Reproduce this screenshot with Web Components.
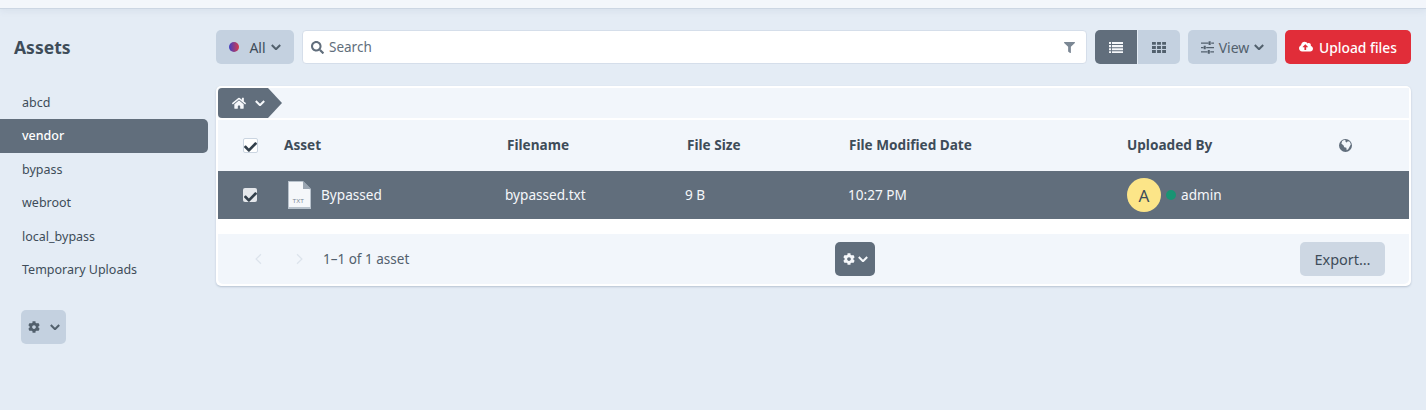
<!DOCTYPE html>
<html lang="en">
<head>
<meta charset="utf-8">
<title>Assets</title>
<style>
  html, body { margin: 0; height: 100%; }
  body { background: #e4ecf5; font-family: "Noto Sans", "Open Sans", sans-serif; font-size: 13.5px; color: #3e4c59; overflow: hidden; }
</style>
</head>
<body>
<asset-page></asset-page>

<script>
const ICONS = {
    gear: ['0 0 512 512', 'M487.4 315.7l-42.6-24.6c4.3-23.2 4.3-47 0-70.2l42.6-24.6c4.9-2.8 7.1-8.6 5.5-14-11.1-35.6-30-67.8-54.7-94.6-3.8-4.1-10-5.1-14.8-2.3L380.8 110c-17.9-15.4-38.5-27.3-60.8-35.1V25.8c0-5.6-3.9-10.5-9.4-11.7-36.7-8.2-74.3-7.8-109.2 0-5.5 1.2-9.4 6.1-9.4 11.7V75c-22.2 7.9-42.8 19.8-60.8 35.1L88.7 85.5c-4.9-2.8-11-1.9-14.8 2.3-24.7 26.7-43.6 58.9-54.7 94.6-1.7 5.4.6 11.2 5.5 14L67.3 221c-4.3 23.2-4.3 47 0 70.2l-42.6 24.6c-4.9 2.8-7.1 8.6-5.5 14 11.1 35.6 30 67.8 54.7 94.6 3.8 4.1 10 5.1 14.8 2.3l42.6-24.6c17.9 15.4 38.5 27.3 60.8 35.1v49.2c0 5.6 3.9 10.5 9.4 11.7 36.7 8.2 74.3 7.8 109.2 0 5.5-1.2 9.4-6.1 9.4-11.7v-49.2c22.2-7.9 42.8-19.8 60.8-35.1l42.6 24.6c4.9 2.8 11 1.9 14.8-2.3 24.7-26.7 43.6-58.9 54.7-94.6 1.5-5.5-.7-11.3-5.6-14.1zM256 336c-44.1 0-80-35.9-80-80s35.9-80 80-80 80 35.9 80 80-35.9 80-80 80z'],
    check: ['0 0 512 512', 'M173.898 439.404l-166.4-166.4c-9.997-9.997-9.997-26.206 0-36.204l36.203-36.204c9.997-9.998 26.207-9.998 36.204 0L192 312.69 432.095 72.596c9.997-9.997 26.207-9.997 36.204 0l36.203 36.204c9.997 9.997 9.997 26.206 0 36.204l-294.4 294.401c-9.998 9.997-26.207 9.997-36.204-.001z'],
    home: ['0 0 576 512', 'M280.37 148.26L96 300.11V464a16 16 0 0 0 16 16l112.06-.29a16 16 0 0 0 15.92-16V368a16 16 0 0 1 16-16h64a16 16 0 0 1 16 16v95.64a16 16 0 0 0 16 16.05L464 480a16 16 0 0 0 16-16V300L295.67 148.26a12.19 12.19 0 0 0-15.3 0zM571.6 251.47L488 182.56V44.05a12 12 0 0 0-12-12h-56a12 12 0 0 0-12 12v72.61L318.47 43a48 48 0 0 0-61 0L4.34 251.47a12 12 0 0 0-1.6 16.9l25.5 31A12 12 0 0 0 45.15 301l235.22-193.74a12.19 12.19 0 0 1 15.3 0L530.9 301a12 12 0 0 0 16.9-1.6l25.5-31a12 12 0 0 0-1.7-16.93z'],
    upload: ['0 0 640 512', 'M537.6 226.6c4.1-10.7 6.4-22.4 6.4-34.6 0-53-43-96-96-96-19.7 0-38.1 6-53.3 16.2C367 64.2 315.3 32 256 32c-88.4 0-160 71.6-160 160 0 2.7.1 5.4.2 8.1C40.2 219.8 0 273.2 0 336c0 79.5 64.5 144 144 144h368c70.7 0 128-57.3 128-128 0-61.9-44-113.6-102.4-125.4zM393.4 288H328v112c0 8.8-7.2 16-16 16h-48c-8.8 0-16-7.2-16-16V288h-65.4c-14.3 0-21.4-17.2-11.3-27.3l105.4-105.4c6.2-6.2 16.4-6.2 22.6 0l105.4 105.4c10.1 10.1 2.9 27.3-11.3 27.3z'],
    filter: ['0 0 512 512', 'M487.976 0H24.028C2.71 0-8.047 25.866 7.058 40.971L192 225.941V432c0 7.831 3.821 15.17 10.237 20.064l80 59.996C298.02 523.19 320 512.641 320 492.052V225.941l184.946-184.97C520.021 25.896 509.338 0 487.976 0z'],
    search: ['0 0 512 512', 'M505 442.7L405.3 343c-4.5-4.5-10.6-7-17-7H372c27.6-35.3 44-79.7 44-128C416 93.1 322.9 0 208 0S0 93.1 0 208s93.1 208 208 208c48.3 0 92.7-16.4 128-44v16.3c0 6.4 2.5 12.5 7 17l99.7 99.7c9.4 9.4 24.6 9.4 33.9 0l28.3-28.3c9.4-9.4 9.4-24.6.1-34zM208 336c-70.7 0-128-57.2-128-128 0-70.7 57.2-128 128-128 70.7 0 128 57.2 128 128 0 70.7-57.2 128-128 128z'],
    list: ['0 0 16 14', 'M0 1h2.4v2.4H0zM3.4 1H16v2.4H3.4zM0 4.6h2.4V7H0zM3.4 4.6H16V7H3.4zM0 8.2h2.4v2.4H0zM3.4 8.2H16v2.4H3.4zM0 11.8h2.4V14H0zM3.4 11.8H16V14H3.4z'],
    grid: ['0 0 16 14', 'M0 1h4.4v3.4H0zM5.8 1h4.4v3.4H5.8zM11.6 1H16v3.4h-4.4zM0 5.6h4.4V9H0zM5.8 5.6h4.4V9H5.8zM11.6 5.6H16V9h-4.4zM0 10.2h4.4v3.4H0zM5.8 10.2h4.4v3.4H5.8zM11.6 10.2H16v3.4h-4.4z'],
    sliders: ['0 0 14 14', 'M0 1.7h8V3H0zM11 1.7h3V3h-3zM8.2.4h2.2v3.9H8.2zM0 6.4h2.6v1.3H0zM5.6 6.4H14v1.3H5.6zM2.9 5.1h2.2V9H2.9zM0 11h7v1.3H0zM10 11h4v1.3h-4zM7.3 9.7h2.2v3.9H7.3z'],
    chevron: ['0 0 12 8', 'M1.8.4L6 4.6 10.2.4 11.9 2.1 6 8 .1 2.1z'],
    left: ['0 0 8 12', 'M6.5.8L1.2 6l5.3 5.2.9-.9L3 6l4.4-4.3z'],
    right: ['0 0 8 12', 'M1.5.8L6.8 6l-5.3 5.2-.9-.9L5 6 .6 1.7z'],
    globe: ['0 0 14 14', 'M7 0a7 7 0 1 0 0 14A7 7 0 0 0 7 0zM3.4 2.2c1-.7 2-.9 3-1l.8.8-.3 1 1.5.8 1-1.3 1.6.3c.9.8 1.6 2 1.7 3.2l-1.2 2-1.6 3-1.6 1-.4-2.7L5.7 9l-.9-2.2L2.6 5z']
};

class AmIcon extends HTMLElement {
    connectedCallback() {
        const [box, d] = ICONS[this.getAttribute('name')];
        const w = this.getAttribute('w') || 14;
        this.attachShadow({ mode: 'open' });
        this.shadowRoot.innerHTML = `
            <style>:host { display: inline-flex; flex: none; } svg { display: block; fill: currentColor; }</style>
            <svg width="${w}" viewBox="${box}"><path fill-rule="evenodd" d="${d}"/></svg>`;
    }
}

class AmButton extends HTMLElement {
    constructor() {
        super();
        this.attachShadow({ mode: 'open' });
        this.shadowRoot.innerHTML = `
            <style>
                :host {
                    display: inline-flex; align-items: center; justify-content: center; box-sizing: border-box;
                    height: 34px; gap: 5px; border-radius: 5px; background: #c4d1e0; color: #3e4c59; flex: none;
                }
                :host([tone="dark"]) { background: #616e7c; color: #f5f7fa; }
                :host([tone="red"]) { background: #e12d39; color: #fff; font-weight: 500; }
                :host([tone="soft"]) { background: #cdd7e3; color: #3e4c59; }
            </style>
            <slot></slot>`;
    }
}

class AmSideItem extends HTMLElement {
    constructor() {
        super();
        this.attachShadow({ mode: 'open' });
        this.shadowRoot.innerHTML = `
            <style>
                :host {
                    display: flex; align-items: center; box-sizing: border-box; height: 33.5px;
                    padding-left: 22px; border-radius: 0 5px 5px 0; color: #3e4c59; font-size: 12.5px;
                }
                :host([active]) { background: #616e7c; color: #fff; font-weight: 500; }
            </style>
            <slot></slot>`;
    }
}

class AmSidebar extends HTMLElement {
    constructor() {
        super();
        this.attachShadow({ mode: 'open' });
        this.shadowRoot.innerHTML = `
            <style>
                :host { display: block; width: 208px; flex: none; }
                h1 { margin: 0; padding: 27px 0 0 14px; height: 49.5px; font-size: 17.5px; line-height: 22px; font-weight: 700; color: #3e4c59; }
                .tools { margin: 23.5px 0 0 21px; }
            </style>
            <h1>Assets</h1>
            <nav>
                <am-side-item>abcd</am-side-item>
                <am-side-item active>vendor</am-side-item>
                <am-side-item>bypass</am-side-item>
                <am-side-item>webroot</am-side-item>
                <am-side-item>local_bypass</am-side-item>
                <am-side-item>Temporary Uploads</am-side-item>
            </nav>
            <div class="tools">
                <am-button style="width:45px;gap:10px;color:#52606d">
                    <am-icon name="gear" w="12"></am-icon><am-icon name="chevron" w="10"></am-icon>
                </am-button>
            </div>`;
    }
}

class AmToolbar extends HTMLElement {
    constructor() {
        super();
        this.attachShadow({ mode: 'open' });
        this.shadowRoot.innerHTML = `
            <style>
                :host { display: flex; align-items: center; height: 34px; font-size: 14px; }
                .dot { width: 10px; height: 10px; border-radius: 50%; background: linear-gradient(90deg, #3f3fc4, #d63a4a); margin-right: 5px; }
                .search {
                    flex: 1; display: flex; align-items: center; height: 34px; box-sizing: border-box;
                    margin: 0 8px; padding: 0 11px 0 8px; gap: 5px; background: #fff; border: 1px solid #d5deea;
                    border-radius: 4px; color: #616e7c; font-size: 13.5px;
                }
                .search span { flex: 1; }
                .seg { display: flex; margin-right: 8px; }
                .seg am-button { width: 42px; }
                .seg am-button:first-child { border-radius: 5px 0 0 5px; margin-right: 1px; }
                .seg am-button:last-child { border-radius: 0 5px 5px 0; width: 42px; color: #52606d; }
            </style>
            <am-button style="width:78px"><span class="dot"></span>All<am-icon name="chevron" w="10" style="color:#52606d"></am-icon></am-button>
            <div class="search">
                <am-icon name="search" w="13"></am-icon><span>Search</span>
                <am-icon name="filter" w="11" style="color:#7b8794"></am-icon>
            </div>
            <div class="seg">
                <am-button tone="dark"><am-icon name="list" w="14"></am-icon></am-button>
                <am-button><am-icon name="grid" w="14"></am-icon></am-button>
            </div>
            <am-button style="width:89px;margin-right:8px;color:#52606d"><am-icon name="sliders" w="13"></am-icon>View<am-icon name="chevron" w="10"></am-icon></am-button>
            <am-button tone="red" style="width:126px;gap:6px;font-size:13.8px"><am-icon name="upload" w="14"></am-icon>Upload files</am-button>`;
    }
}

class AmCheck extends HTMLElement {
    constructor() {
        super();
        this.attachShadow({ mode: 'open' });
        this.shadowRoot.innerHTML = `
            <style>
                :host {
                    display: inline-flex; align-items: center; justify-content: center; box-sizing: border-box;
                    width: 15px; height: 15px; border-radius: 2px; background: #fff; border: 1px solid #cbd5e1; color: #323f4b;
                }
                :host([bare]) { border: 0; width: 14px; height: 14px; background: #e4e7eb; }
                am-icon { transform: translateY(1.5px); }
            </style>
            <am-icon name="check" w="13"></am-icon>`;
    }
}

class AssetTable extends HTMLElement {
    constructor() {
        super();
        this.attachShadow({ mode: 'open' });
        this.shadowRoot.innerHTML = `
            <style>
                :host { display: block; font-size: 13.6px; }
                .row { display: grid; grid-template-columns: 66px 221px 180px 163px 279px 212px 1fr; align-items: center; }
                .head { height: 51px; background: #f2f6fb; font-weight: 700; color: #3e4c59; font-size: 13.6px; }
                .nudge { transform: translateX(2px); }
                .nudge1 { transform: translateX(1px); }
                .t { padding-bottom: 2px; }
                .body { height: 48px; background: #616e7c; color: #f5f7fa; }
                .cc { display: flex; justify-content: center; transform: translateX(-1px); }
                .asset { display: flex; align-items: center; gap: 10px; }
                .user { display: flex; align-items: center; }
                .avatar { width: 34px; height: 34px; border-radius: 50%; background: #fce588; color: #3e4c59; display: flex; align-items: center; justify-content: center; font-size: 17px; }
                .status { width: 10px; height: 10px; border-radius: 50%; background: #199473; margin: 0 5px; }
                .spacer { height: 15px; background: #fff; }
                .globe { color: #616e7c; display: flex; }
                svg text { font-family: "Liberation Sans", sans-serif; font-size: 6px; fill: #7b8794; }
            </style>
            <div class="row head">
                <div class="cc"><am-check></am-check></div>
                <div class="t">Asset</div><div class="t nudge">Filename</div><div class="t nudge">File Size</div>
                <div class="t nudge1">File Modified Date</div><div class="t">Uploaded By</div>
                <div class="globe"><am-icon name="globe" w="13"></am-icon></div>
            </div>
            <div class="row body">
                <div class="cc"><am-check bare></am-check></div>
                <div class="asset">
                    <svg width="23" height="28" viewBox="0 0 23 28" style="margin-left:4px;flex:none">
                        <path d="M0 0h15l8 8v20H0z" fill="#b8c2cc"/>
                        <path d="M1 1h13.5l7.5 7.5V26H1z" fill="#f5f7fa"/>
                        <path d="M15 0l8 8h-8z" fill="#9aa5b1"/>
                        <text x="4.5" y="21.5">TXT</text>
                    </svg>
                    <span class="t">Bypassed</span>
                </div>
                <div class="t">bypassed.txt</div><div class="t">9 B</div><div class="t">10:27 PM</div>
                <div class="user"><span class="avatar">A</span><span class="status"></span><span class="t">admin</span></div>
                <div></div>
            </div>
            <div class="spacer"></div>`;
    }
}

class AmFooter extends HTMLElement {
    constructor() {
        super();
        this.attachShadow({ mode: 'open' });
        this.shadowRoot.innerHTML = `
            <style>
                :host { display: grid; grid-template-columns: 581px auto 1fr; align-items: center; height: 50px; padding: 0 24px 0 36px; background: #f2f6fb; border-radius: 0 0 5px 5px; font-size: 13.5px; color: #52606d; }
                .left { display: flex; align-items: center; }
                .pager { display: flex; color: #dde4ec; gap: 34px; margin-right: 19px; }
                .right { display: flex; justify-content: flex-end; font-size: 14.5px; }
            </style>
            <div class="left">
                <div class="pager"><am-icon name="left" w="8"></am-icon><am-icon name="right" w="8"></am-icon></div>
                <span>1–1 of 1 asset</span>
            </div>
            <am-button tone="dark" style="width:40px;gap:3px"><am-icon name="gear" w="12"></am-icon><am-icon name="chevron" w="10"></am-icon></am-button>
            <div class="right"><am-button tone="soft" style="width:85px">Export…</am-button></div>`;
    }
}

class AmCrumb extends HTMLElement {
    constructor() {
        super();
        this.attachShadow({ mode: 'open' });
        this.shadowRoot.innerHTML = `
            <style>
                :host { display: block; height: 32px; background: #f2f6fb; border-bottom: 2px solid #fff; box-sizing: border-box; }
                .crumb {
                    display: flex; align-items: center; gap: 9px; width: 64px; height: 30px; box-sizing: border-box; padding-left: 14px;
                    background: #616e7c; color: #f5f7fa; border-radius: 4px 0 0 4px;
                    clip-path: polygon(0 0, 50px 0, 64px 50%, 50px 100%, 0 100%);
                }
            </style>
            <div class="crumb"><am-icon name="home" w="14"></am-icon><am-icon name="chevron" w="10"></am-icon></div>`;
    }
}

class AssetPage extends HTMLElement {
    constructor() {
        super();
        this.attachShadow({ mode: 'open' });
        this.shadowRoot.innerHTML = `
            <style>
                :host { display: block; height: 410px; }
                .top { height: 8px; background: #f3f6fb; border-bottom: 1px solid #ccd6e3; box-shadow: 0 2px 6px rgba(120,140,170,.12); }
                .layout { display: flex; gap: 8px; padding-right: 15px; }
                main { flex: 1; min-width: 0; padding-top: 21px; }
                .panel { margin-top: 22px; padding: 2px; background: #fff; border-radius: 5px; box-shadow: 0 1px 2px rgba(80,100,130,.3); }
            </style>
            <div class="top"></div>
            <div class="layout">
                <am-sidebar></am-sidebar>
                <main>
                    <am-toolbar></am-toolbar>
                    <div class="panel">
                        <am-crumb></am-crumb>
                        <asset-table></asset-table>
                        <am-footer></am-footer>
                    </div>
                </main>
            </div>`;
    }
}

customElements.define('am-icon', AmIcon);
customElements.define('am-button', AmButton);
customElements.define('am-side-item', AmSideItem);
customElements.define('am-sidebar', AmSidebar);
customElements.define('am-toolbar', AmToolbar);
customElements.define('am-check', AmCheck);
customElements.define('asset-table', AssetTable);
customElements.define('am-footer', AmFooter);
customElements.define('am-crumb', AmCrumb);
customElements.define('asset-page', AssetPage);
</script>
</body>
</html>
